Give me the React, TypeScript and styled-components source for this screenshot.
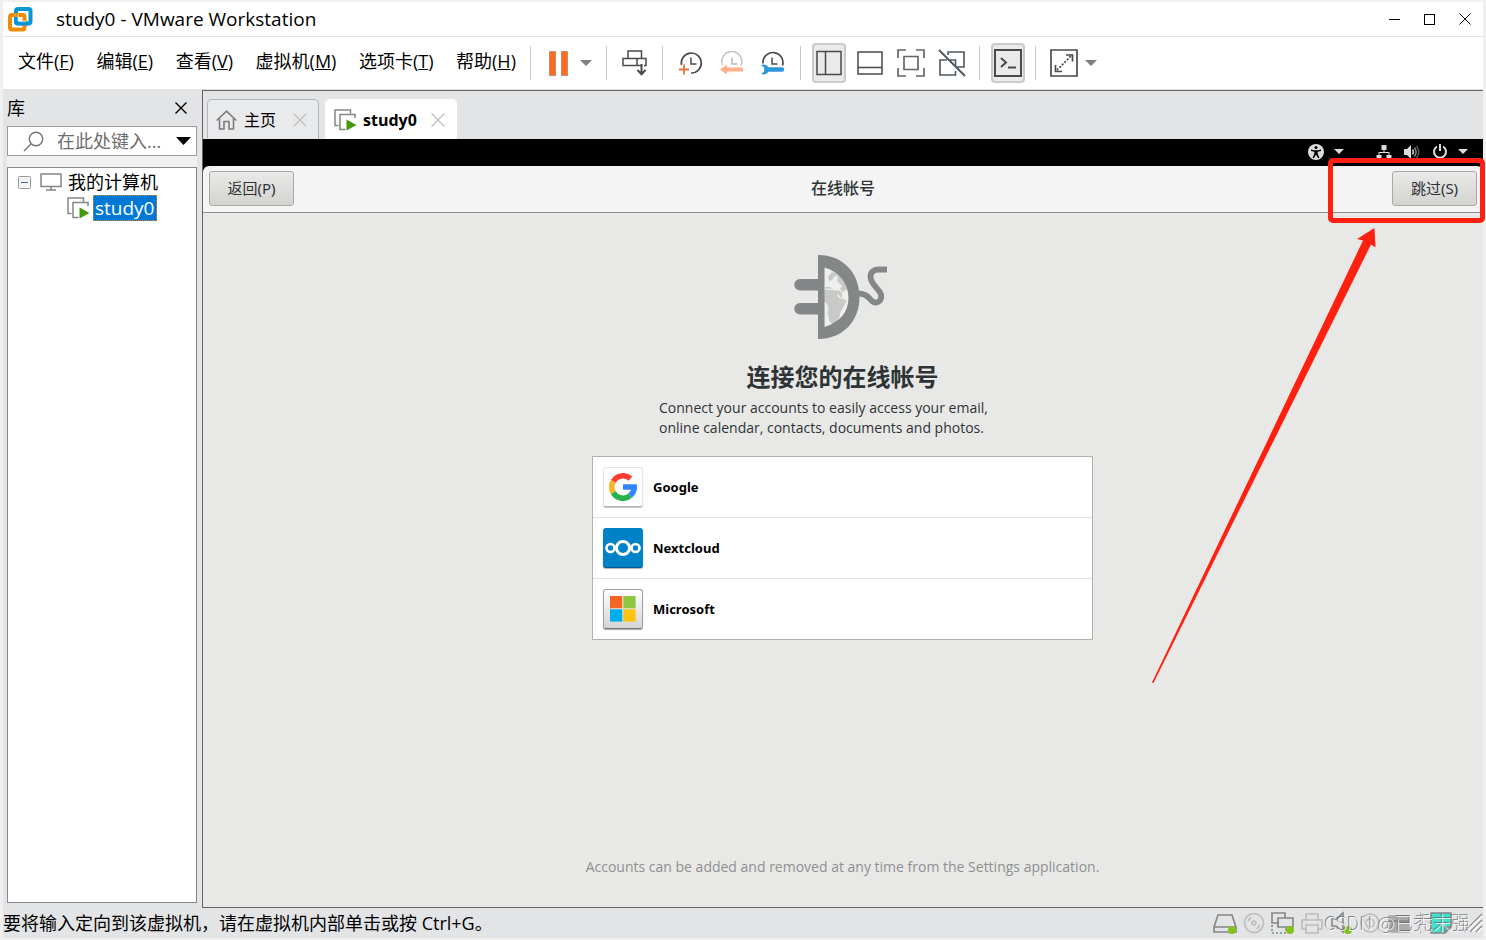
import React from "react";
import styled, { createGlobalStyle, css } from "styled-components";

const uiFont = '"Open Sans", "Noto Sans CJK SC", sans-serif';
const guestFont = '"Noto Sans", "Noto Sans CJK SC", sans-serif';

const GlobalStyle = createGlobalStyle`
  *, *::before, *::after { box-sizing: border-box; }
  body { margin: 0; background: #f0f0f0; font-family: ${uiFont}; color: #000; }
  button, input { font: inherit; color: inherit; }
  svg { display: block; flex: none; }
`;

const AppWindow = styled.div`
  display: flex;
  flex-direction: column;
  min-height: 100vh;
  padding: 2px 3px;
  overflow: hidden;
`;

const TitleBar = styled.header`
  display: flex;
  align-items: center;
  height: 35px;
  padding: 0 5px;
  background: #fff;
  border-bottom: 1px solid #e2e2e2;
`;

const WindowTitle = styled.h1`
  flex: 1;
  margin: 0 0 0 23px;
  font-size: 19px;
  line-height: 24px;
  font-weight: 400;
`;

const CaptionButton = styled.button`
  display: flex;
  align-items: center;
  justify-content: center;
  width: 35px;
  height: 34px;
  padding: 0;
  border: 0;
  background: none;
`;

const CaptionButtons = styled.div`
  display: flex;
  margin-right: -4px;
`;

const Toolbar = styled.div`
  display: flex;
  align-items: center;
  height: 53px;
  padding-left: 15px;
  background: #fff;
  border-bottom: 1px solid #e2e2e2;
`;

const MenuBar = styled.nav`
  display: flex;
  justify-content: space-between;
  width: 498px;
  margin: 0 4px 4px 0;
`;

const MenuButton = styled.button`
  padding: 0;
  border: 0;
  background: none;
  font-size: 18px;
  line-height: 24px;
  white-space: nowrap;
`;

const Separator = styled.span`
  flex: none;
  width: 1px;
  height: 34px;
  margin: 0 11px 0 10px;
  background: #c8c8c8;
`;

const ToolGroup = styled.div`
  display: flex;
  align-items: center;
  gap: 7px;
`;

const ToolButton = styled.button<{ $active?: boolean }>`
  display: flex;
  align-items: center;
  justify-content: center;
  width: 34px;
  height: 40px;
  padding: 0;
  border: 2px solid ${(p) => (p.$active ? "#c9caca" : "transparent")};
  border-radius: 4px;
  background: ${(p) => (p.$active ? "#e9eaeb" : "none")};
`;

const CaretButton = styled.button`
  display: flex;
  align-items: center;
  justify-content: center;
  width: 20px;
  height: 40px;
  padding: 0;
  border: 0;
  background: none;
`;

const Workspace = styled.div`
  display: flex;
  flex: 1;
  background: #e3e4e6;
`;

const Library = styled.aside`
  display: flex;
  flex-direction: column;
  flex: none;
  width: 199px;
  padding: 6px 5px 5px 4px;
`;

const LibraryHeader = styled.div`
  display: flex;
  align-items: center;
  justify-content: space-between;
  height: 30px;
  padding: 0 10px 6px 0;
`;

const LibraryTitle = styled.h2`
  margin: 0;
  font-size: 18px;
  line-height: 24px;
  font-weight: 400;
`;

const PlainButton = styled.button`
  display: flex;
  padding: 0;
  border: 0;
  background: none;
`;

const SearchBox = styled.label`
  display: flex;
  align-items: center;
  height: 30px;
  padding: 0 5px 0 15px;
  border: 1px solid #9a9b9d;
  background: #fff;
`;

const SearchInput = styled.input`
  flex: 1;
  min-width: 0;
  margin-left: 13px;
  padding: 0;
  border: 0;
  outline: 0;
  background: none;
  font-size: 18px;
  line-height: 24px;
  &::placeholder { color: #6d6d6d; opacity: 1; }
`;

const TreePanel = styled.div`
  display: flex;
  flex: 1;
  padding-top: 11px;
  background: linear-gradient(#f0f0f0, #f0f0f0) top / 100% 11px no-repeat;
`;

const Tree = styled.ul`
  flex: 1;
  margin: 0;
  padding: 1px 0 0 10px;
  list-style: none;
  border: 1px solid #828790;
  background: #fff;
`;

const TreeItem = styled.li<{ $depth?: number }>`
  display: flex;
  align-items: center;
  height: 26px;
  padding-left: ${(p) => (p.$depth ?? 0) * 49}px;
  font-size: 18px;
  line-height: 24px;
`;

const TreeIcon = styled.span`
  margin-left: 9px;
`;

const TreeLabel = styled.span<{ $selected?: boolean }>`
  margin-left: 6px;
  ${(p) =>
    p.$selected &&
    css`
      margin-left: 3px;
      padding: 0 1px;
      color: #fff;
      background: #0078d7;
      border: 1px dotted #e08728;
      font-size: 19px;
    `}
`;

const Pane = styled.main`
  display: flex;
  flex: 1;
  flex-direction: column;
  min-width: 0;
  border: 1px solid #646464;
  border-right: 0;
`;

const TabStrip = styled.div`
  display: flex;
  align-items: flex-end;
  gap: 6px;
  height: 48px;
  padding-left: 4px;
`;

const Tab = styled.div<{ $active?: boolean }>`
  display: flex;
  align-items: center;
  width: ${(p) => (p.$active ? 132 : 112)}px;
  height: 40px;
  padding: 0 11px 0 8px;
  border: 1px solid ${(p) => (p.$active ? "#fff" : "#b4b5b6")};
  border-bottom: 0;
  border-radius: 5px 5px 0 0;
  background: ${(p) => (p.$active ? "#fff" : "#e9eaec")};
`;

const TabLabel = styled.button<{ $active?: boolean }>`
  flex: 1;
  margin-left: ${(p) => (p.$active ? 6 : 7)}px;
  padding: 0;
  border: 0;
  background: none;
  text-align: left;
  font-size: 16px;
  line-height: 24px;
  font-weight: ${(p) => (p.$active ? 700 : 400)};
`;

const Guest = styled.section`
  position: relative;
  display: flex;
  flex: 1;
  flex-direction: column;
  background: #000;
  color: #2e3436;
  font-family: ${guestFont};
`;

const GuestTopBar = styled.div`
  display: flex;
  align-items: center;
  justify-content: flex-end;
  height: 27px;
  padding: 0 15px 2px 0;
`;

const IndicatorButton = styled.button`
  display: flex;
  align-items: center;
  gap: 10px;
  margin-left: 32px;
  padding: 0;
  border: 0;
  background: none;
`;

const SystemIcons = styled.span`
  display: flex;
  align-items: center;
  gap: 12px;
`;

const GuestHeader = styled.header`
  display: grid;
  grid-template-columns: 1fr auto 1fr;
  align-items: center;
  height: 47px;
  padding: 0 6px 2px;
  border-bottom: 1px solid #8e8e8a;
  border-radius: 6px 6px 0 0;
  background: #f4f4f4;
`;

const GuestTitle = styled.h2`
  margin: 0;
  font-size: 16px;
  line-height: 24px;
  font-weight: 500;
`;

const GuestButton = styled.button<{ $end?: boolean }>`
  justify-self: ${(p) => (p.$end ? "end" : "start")};
  width: 85px;
  height: 35px;
  padding: 0;
  border: 1px solid #a9a9a5;
  border-radius: 3px;
  background: linear-gradient(#e9e9e8, #d3d3d0);
  font-size: 15px;
  line-height: 24px;
`;

const AccountsPage = styled.div`
  display: flex;
  flex: 1;
  flex-direction: column;
  align-items: center;
  padding: 42px 17px 30px 16px;
  background: #e8e8e6;
`;

const PageHeading = styled.h3`
  margin: 22px 0 5px;
  font-size: 24px;
  line-height: 32px;
  font-weight: 700;
`;

const Description = styled.p`
  width: 367px;
  margin: 0 0 18px;
  font-family: ${uiFont};
  font-size: 14px;
  line-height: 20px;
`;

const ProviderList = styled.ul`
  width: 100%;
  max-width: 501px;
  margin: 0 0 40px;
  padding: 0;
  list-style: none;
  border: 1px solid #b3b3ae;
  background: #fff;
`;

const ProviderItem = styled.li`
  & + & { border-top: 1px solid #e1e1e0; }
`;

const ProviderButton = styled.button`
  display: flex;
  align-items: center;
  gap: 10px;
  width: 100%;
  height: 60px;
  padding: 0 10px;
  border: 0;
  background: none;
  color: #000;
  font-size: 13px;
  line-height: 20px;
  font-weight: 700;
`;

const Tile = styled.span<{ $kind: "google" | "nextcloud" | "microsoft" }>`
  display: flex;
  align-items: center;
  justify-content: center;
  width: 40px;
  height: 40px;
  border-radius: 3px;
  ${(p) =>
    p.$kind === "google" &&
    css`
      border: 1px solid #e6e6e4;
      border-bottom-color: #b4b4b0;
      box-shadow: 0 1px 1px #c4c4c0;
    `}
  ${(p) =>
    p.$kind === "nextcloud" &&
    css`
      background: #0082c9;
      border-bottom: 1px solid #00588a;
      box-shadow: 0 1px 1px #b0b0b0;
    `}
  ${(p) =>
    p.$kind === "microsoft" &&
    css`
      background: linear-gradient(#fff, #d4d4d4);
      border: 1px solid #a0a0a0;
      border-bottom-color: #777;
      box-shadow: 0 1px 1px #a8a8a8;
    `}
`;

const Footnote = styled.p`
  margin: auto 0 0;
  color: #8f9190;
  font-family: ${uiFont};
  font-size: 14px;
  line-height: 20px;
`;

const HighlightFrame = styled.div`
  position: absolute;
  top: 19px;
  right: -2px;
  width: 157px;
  height: 65px;
  border: 5px solid #ff2010;
  border-radius: 5px;
  pointer-events: none;
`;

const HighlightArrow = styled.svg`
  position: absolute;
  top: 88px;
  right: 106px;
  pointer-events: none;
`;

const StatusBar = styled.footer`
  position: relative;
  display: flex;
  align-items: center;
  justify-content: space-between;
  height: 30px;
  background: #e3e4e6;
`;

const StatusText = styled.span`
  font-size: 18px;
  line-height: 24px;
`;

const StatusTray = styled.div`
  display: flex;
  align-items: center;
  gap: 10px;
`;

const StatusIcons = styled.div`
  display: flex;
  align-items: center;
  gap: 5px;
`;

const StatusSeparator = styled.span`
  width: 1px;
  height: 22px;
  margin: 0 3px 0 4px;
  background: #bdbdbd;
`;

const Watermark = styled.span`
  position: absolute;
  right: 12px;
  top: 2px;
  color: rgba(250, 250, 250, 0.85);
  text-shadow: -1px -1px 0 rgba(100, 100, 100, 0.8);
  font-family: "Noto Sans CJK SC", sans-serif;
  font-size: 19px;
  line-height: 26px;
  font-weight: 300;
  white-space: nowrap;
`;

const ink = "#4a4a4a";

const VmwareLogo = () => (
  <svg width="25" height="25" viewBox="0 0 25 25" fill="none" strokeWidth="4">
    <rect x="8" y="2" width="14.5" height="14.5" rx="2" stroke="#0a95d5" />
    <rect x="2" y="8" width="14.5" height="14.5" rx="2" stroke="#f38b00" />
    <path d="M8 10.5V14.5a2 2 0 0 0 2 2H20.5" stroke="#0a95d5" />
    <path d="M7.5 8h-1M10.2 7.2V13.2q0 1 1 1H18" stroke="#fff" strokeWidth="0.8" />
  </svg>
);

const Caret = ({ w = 12, h = 6, color = "#808080" }: { w?: number; h?: number; color?: string }) => (
  <svg width={w} height={h} viewBox="0 0 12 6" preserveAspectRatio="none">
    <path d="M0 0H12L6 6Z" fill={color} />
  </svg>
);

const Cross = ({ size, color, stroke = 1 }: { size: number; color: string; stroke?: number }) => (
  <svg width={size} height={size} viewBox="0 0 12 12">
    <path d="M0.5 0.5L11.5 11.5M11.5 0.5L0.5 11.5" stroke={color} strokeWidth={stroke} />
  </svg>
);

const PauseIcon = () => (
  <svg width="20" height="25" viewBox="0 0 20 25">
    <path d="M0.5 0.5h6v24h-6zM12.5 0.5h6v24h-6z" fill="#ff6a1c" stroke="#c2906f" />
  </svg>
);

const SendKeysIcon = () => (
  <svg width="26" height="26" viewBox="0 0 26 26" fill="none" stroke={ink} strokeWidth="1.5">
    <path d="M6 1h13.500v7.500H6zM1 8.500h14v7H1zM19 15.500H15V8.500h9v7h-2" />
    <path d="M19.500 14v10M15.500 20l4 4.200 4-4.200" strokeWidth="2" />
  </svg>
);

const Dial = ({ color }: { color: string }) => (
  <path d="M12 6.500v6.500h5.500" stroke={color} strokeWidth="1.500" />
);

const SnapshotIcon = () => (
  <svg width="24" height="24" viewBox="0 0 24 24" fill="none">
    <path d="M2.500 14A10 10 0 1 1 12 22" stroke={ink} strokeWidth="1.700" />
    <Dial color={ink} />
    <path d="M0 18.500h10M5 13.500v10" stroke="#e8703a" strokeWidth="1.800" />
  </svg>
);

const RevertIcon = () => (
  <svg width="24" height="24" viewBox="0 0 24 24" fill="none">
    <path d="M2.500 14A10 10 0 1 1 21 14.500" stroke="#c0c0c0" strokeWidth="1.500" />
    <Dial color="#b8b8b8" />
    <path d="M0 18.500l7-5v3h16v4H7v3z" fill="#ffb08c" />
  </svg>
);

const ManageIcon = () => (
  <svg width="26" height="24" viewBox="0 0 26 24" fill="none">
    <path d="M3 12.500A10 10 0 1 1 22.500 14.500" stroke={ink} strokeWidth="1.700" />
    <Dial color={ink} />
    <path d="M1 14.200c3-1.500 6-.6 7.200 2.100H22a2.200 2.200 0 0 1 0 4.400H8.200C7 23.300 4 24.200 1 22.800l3.200-2.300v-4z" fill="#2c97d9" />
  </svg>
);

const SplitIcon = () => (
  <svg width="26" height="26" viewBox="0 0 26 26" fill="none" stroke={ink} strokeWidth="1.500">
    <path d="M1 1.500h24v23H1zM9.500 1.500v23" />
  </svg>
);

const ThumbBarIcon = () => (
  <svg width="26" height="26" viewBox="0 0 26 26" fill="none" stroke={ink} strokeWidth="1.500">
    <path d="M1 2h24v22H1zM1 17.500h24" />
  </svg>
);

const FullScreenIcon = () => (
  <svg width="28" height="28" viewBox="0 0 28 28" fill="none" stroke="#666" strokeWidth="1.700">
    <path d="M1 9V1h8M19 1h8v8M27 19v8h-8M9 27H1v-8M7 7.500h14v13H7z" />
  </svg>
);

const UnityIcon = () => (
  <svg width="28" height="28" viewBox="0 0 28 28" fill="none" stroke="#4d5863" strokeWidth="1.600">
    <path d="M10 6V3h16v15h-7M17.500 22v4H2V11h7M12 11h5.500v6" />
    <path d="M1 1l26 26" strokeWidth="2" />
  </svg>
);

const ConsoleIcon = () => (
  <svg width="28" height="28" viewBox="0 0 28 28" fill="none" stroke={ink} strokeWidth="2">
    <path d="M1 1h26v26H1z" />
    <path d="M7 9l5 4.500-5 4.500M14 18.500h8" />
  </svg>
);

const StretchIcon = () => (
  <svg width="28" height="28" viewBox="0 0 28 28" fill="none" stroke={ink} strokeWidth="1.700">
    <path d="M1 1h26v26H1zM16 6h6.500v6.500M5.500 16v6.500H12" />
    <path d="M7 21L21 7" strokeDasharray="2 1.500" />
  </svg>
);

const SearchIcon = () => (
  <svg width="21" height="21" viewBox="0 0 21 21" fill="none" stroke="#777" strokeWidth="1.500">
    <circle cx="13" cy="8" r="6.700" />
    <path d="M8 13L1 20" />
  </svg>
);

const ExpanderIcon = () => (
  <svg width="13" height="13" viewBox="0 0 13 13">
    <rect x="0.500" y="0.500" width="12" height="12" rx="1" fill="#f5f5f5" stroke="#999" />
    <path d="M3 6.500h7" stroke="#4663a8" />
  </svg>
);

const MonitorIcon = () => (
  <svg width="22" height="18" viewBox="0 0 22 18" fill="none" stroke="#858585" strokeWidth="1.500">
    <path d="M1 1h20v12.500H1zM11 13.500V17M6 17h10" />
  </svg>
);

const VmIcon = () => (
  <svg width="23" height="22" viewBox="0 0 23 22" fill="none">
    <path d="M4.500 16.500H1V1h15.500v3.500M11.500 20.500H6V5.500h15V9" stroke="#858585" strokeWidth="1.500" />
    <path d="M12.500 10.500l10 5.500-10 5.500z" fill="#45990f" />
  </svg>
);

const HomeIcon = () => (
  <svg width="21" height="20" viewBox="0 0 21 20" fill="none" stroke="#7d7d7d" strokeWidth="1.600">
    <path d="M0.700 10.500L10.500 1.200l9.800 9.300M3.500 8.500V19h4.500v-7.500h5V19h4.500V8.500" />
  </svg>
);

const AccessibilityIcon = () => (
  <svg width="16" height="16" viewBox="0 0 16 16">
    <circle cx="8" cy="8" r="8" fill="#ddd" />
    <circle cx="8" cy="3.600" r="1.500" fill="#000" />
    <path d="M3 5.500l3.500.7h3l3.500-.7v1.400l-3.300.8v2l1.700 4-1.300.5L8 10.500l-2.100 3.700-1.300-.5 1.700-4v-2L3 6.900z" fill="#000" />
  </svg>
);

const NetworkIcon = () => (
  <svg width="16" height="14" viewBox="0 0 16 14" fill="#ddd">
    <path d="M5.500 0h5v5h-2v2h5v3h2v4h-5v-4h2V8h-9v2h2v4h-5v-4h2V7h5V5h-2z" />
  </svg>
);

const VolumeIcon = () => (
  <svg width="16" height="14" viewBox="0 0 16 14" fill="none">
    <path d="M0 4h3l4-4v14L3 10H0z" fill="#ddd" />
    <path d="M8.500 4.500q1.700 2.500 0 5" stroke="#ccc" strokeWidth="1.500" />
    <path d="M10.500 2.500q3.200 4.500 0 9" stroke="#888" strokeWidth="1.500" />
    <path d="M12.500 1q4.500 6 0 12" stroke="#555" strokeWidth="1.500" />
  </svg>
);

const PowerIcon = () => (
  <svg width="16" height="15" viewBox="0 0 16 15" fill="none" stroke="#ddd" strokeWidth="2">
    <path d="M5 2.500a6 6 0 1 0 6 0M8 0v7" />
  </svg>
);

const PlugArt = () => (
  <svg width="97" height="84" viewBox="0 0 97 84">
    <path d="M31 12.500C46 16 54.500 28 54.500 43S45 69 31 71z" fill="#efefed" />
    <path d="M30.500 32h5l4 2 5 1 3 2 1 6 4 3-2 4-4 7-1 5-4 6-3 1-3-3-2-8 1-6-3-5h-1.500zM34 22l4-5 4 1 1 3-3 1-2 3-3 1zM42 17q6 3 10 11l1 6-4 3-3-3 2-3-5-5 1-4z" fill="#c9c9c8" />
    <path d="M30.500 31q6-1 12 2l1 2-13-1zM44 39q1 5 5 4l4-3" fill="none" stroke="#efefed" strokeWidth="1.300" />
    <path d="M24 0C50 0 65.500 19 65.500 42S50 84 24 84V59.500H6a5.750 5.750 0 0 1 0-11.500H24V35.500H6a5.750 5.750 0 0 1 0-11.500H24zM30.500 12.500V72C46 67 54.500 57 54.500 43S46 17 30.500 12.500z" fill="#838787" fillRule="evenodd" />
    <path d="M64 38.500c6 0 9 1.500 12 5.500 2 2.500 5 4.500 8 3 4-2 4-7 1.500-10.500-3-4-9-9-9-14.500 0-5 3.200-7.500 7.700-7.500h8.800" fill="none" stroke="#838787" strokeWidth="5.800" />
  </svg>
);

const GoogleMark = () => (
  <svg width="28" height="28" viewBox="-14 -14 28 28" fill="none" strokeWidth="5.600">
    <path d="M-9.700 -5.600A11.200 11.200 0 0 1 7.500 -8.300" stroke="#ff3e30" />
    <path d="M-9.700 5.600A11.200 11.200 0 0 1 -9.700 -5.600" stroke="#f7b529" />
    <path d="M7.200 8.600A11.200 11.200 0 0 1 -9.700 5.600" stroke="#26b14c" />
    <path d="M11.200 0A11.200 11.200 0 0 1 7.200 8.600" stroke="#3086ff" />
    <path d="M0 -2.700h13.700q.5 2.700 0 5.400H0z" fill="#3086ff" />
  </svg>
);

const NextcloudMark = () => (
  <svg width="36" height="16" viewBox="0 0 36 16" fill="none" stroke="#fff">
    <circle cx="18" cy="8" r="6.500" strokeWidth="3" />
    <circle cx="5.500" cy="8" r="4" strokeWidth="2.700" />
    <circle cx="30.500" cy="8" r="4" strokeWidth="2.700" />
  </svg>
);

const MicrosoftMark = () => (
  <svg width="26" height="26" viewBox="0 0 26 26">
    <path d="M0 0h12.300v12.300H0z" fill="#f56523" />
    <path d="M13.300 0h12.300v12.300H13.300z" fill="#8ec73f" />
    <path d="M0 13.300h12.300v12.300H0z" fill="#00aef0" />
    <path d="M13.300 13.300h12.300v12.300H13.300z" fill="#ffc211" />
  </svg>
);

const StatusGlyph = ({ dim, dot, children }: { dim?: boolean; dot?: boolean; children: React.ReactNode }) => (
  <svg width="24" height="24" viewBox="0 0 24 24" fill="none" stroke={dim ? "#bbb" : "#858585"} strokeWidth="1.600">
    {children}
    {dot && <circle cx="19" cy="19" r="4" fill="#84c318" stroke="none" />}
  </svg>
);

const SizeGrip = () => (
  <svg width="20" height="20" viewBox="0 0 20 20" stroke="#8c8c8c" strokeWidth="1.500">
    <path d="M1 19L19 1M7 19L19 7M13 19l6-6" />
    <path d="M3 19L19 3M9 19L19 9M15 19l4-4" stroke="#fff" />
  </svg>
);

const menus: [string, string][] = [
  ["文件", "F"],
  ["编辑", "E"],
  ["查看", "V"],
  ["虚拟机", "M"],
  ["选项卡", "T"],
  ["帮助", "H"],
];

const providers = [
  { name: "Google", kind: "google" as const, mark: <GoogleMark /> },
  { name: "Nextcloud", kind: "nextcloud" as const, mark: <NextcloudMark /> },
  { name: "Microsoft", kind: "microsoft" as const, mark: <MicrosoftMark /> },
];

export default function App() {
  return (
    <AppWindow>
      <GlobalStyle />
      <TitleBar>
        <VmwareLogo />
        <WindowTitle>study0 - VMware Workstation</WindowTitle>
        <CaptionButtons>
          <CaptionButton aria-label="最小化">
            <svg width="11" height="1"><path d="M0 0.500h11" stroke="#000" /></svg>
          </CaptionButton>
          <CaptionButton aria-label="最大化">
            <svg width="11" height="11"><rect x="0.500" y="0.500" width="10" height="10" fill="none" stroke="#000" /></svg>
          </CaptionButton>
          <CaptionButton aria-label="关闭"><Cross size={12} color="#000" /></CaptionButton>
        </CaptionButtons>
      </TitleBar>

      <Toolbar>
        <MenuBar>
          {menus.map(([label, key]) => (
            <MenuButton key={key}>
              {label}(<u>{key}</u>)
            </MenuButton>
          ))}
        </MenuBar>
        <Separator />
        <ToolButton aria-label="挂起"><PauseIcon /></ToolButton>
        <CaretButton aria-label="电源选项"><Caret /></CaretButton>
        <Separator />
        <ToolButton aria-label="发送按键"><SendKeysIcon /></ToolButton>
        <Separator />
        <ToolGroup>
          <ToolButton aria-label="拍摄快照"><SnapshotIcon /></ToolButton>
          <ToolButton aria-label="恢复快照"><RevertIcon /></ToolButton>
          <ToolButton aria-label="管理快照"><ManageIcon /></ToolButton>
        </ToolGroup>
        <Separator />
        <ToolGroup>
          <ToolButton $active aria-label="显示库"><SplitIcon /></ToolButton>
          <ToolButton aria-label="缩略图栏"><ThumbBarIcon /></ToolButton>
          <ToolButton aria-label="全屏"><FullScreenIcon /></ToolButton>
          <ToolButton aria-label="Unity"><UnityIcon /></ToolButton>
        </ToolGroup>
        <Separator />
        <ToolButton $active aria-label="控制台视图"><ConsoleIcon /></ToolButton>
        <Separator />
        <ToolButton aria-label="拉伸"><StretchIcon /></ToolButton>
        <CaretButton aria-label="拉伸选项"><Caret /></CaretButton>
      </Toolbar>

      <Workspace>
        <Library>
          <LibraryHeader>
            <LibraryTitle>库</LibraryTitle>
            <PlainButton aria-label="关闭库"><Cross size={12} color="#000" stroke={1.4} /></PlainButton>
          </LibraryHeader>
          <SearchBox>
            <SearchIcon />
            <SearchInput placeholder="在此处键入..." aria-label="搜索" />
            <Caret w={15} h={8} color="#000" />
          </SearchBox>
          <TreePanel>
            <Tree>
              <TreeItem>
                <PlainButton aria-label="折叠"><ExpanderIcon /></PlainButton>
                <TreeIcon><MonitorIcon /></TreeIcon>
                <TreeLabel>我的计算机</TreeLabel>
              </TreeItem>
              <TreeItem $depth={1}>
                <VmIcon />
                <TreeLabel $selected>study0</TreeLabel>
              </TreeItem>
            </Tree>
          </TreePanel>
        </Library>

        <Pane>
          <TabStrip>
            <Tab>
              <HomeIcon />
              <TabLabel>主页</TabLabel>
              <PlainButton aria-label="关闭主页"><Cross size={14} color="#c4c4c4" stroke={1.3} /></PlainButton>
            </Tab>
            <Tab $active>
              <VmIcon />
              <TabLabel $active>study0</TabLabel>
              <PlainButton aria-label="关闭 study0"><Cross size={14} color="#c4c4c4" stroke={1.3} /></PlainButton>
            </Tab>
          </TabStrip>

          <Guest>
            <GuestTopBar>
              <IndicatorButton aria-label="辅助功能">
                <AccessibilityIcon />
                <Caret w={10} h={5} color="#ddd" />
              </IndicatorButton>
              <IndicatorButton aria-label="系统">
                <SystemIcons>
                  <NetworkIcon />
                  <VolumeIcon />
                  <PowerIcon />
                </SystemIcons>
                <Caret w={10} h={5} color="#ddd" />
              </IndicatorButton>
            </GuestTopBar>
            <GuestHeader>
              <GuestButton>返回(P)</GuestButton>
              <GuestTitle>在线帐号</GuestTitle>
              <GuestButton $end>跳过(S)</GuestButton>
            </GuestHeader>
            <AccountsPage>
              <PlugArt />
              <PageHeading>连接您的在线帐号</PageHeading>
              <Description>
                Connect your accounts to easily access your email,
                <br />
                online calendar, contacts, documents and photos.
              </Description>
              <ProviderList>
                {providers.map((p) => (
                  <ProviderItem key={p.name}>
                    <ProviderButton>
                      <Tile $kind={p.kind}>{p.mark}</Tile>
                      {p.name}
                    </ProviderButton>
                  </ProviderItem>
                ))}
              </ProviderList>
              <Footnote>Accounts can be added and removed at any time from the Settings application.</Footnote>
            </AccountsPage>
            <HighlightFrame />
            <HighlightArrow width="226" height="457" viewBox="0 0 226 457">
              <path d="M223.500 1L206 12l6 1.500L1 455.500l1.500.5L220 17.500l4.500 3z" fill="#ff2010" />
            </HighlightArrow>
          </Guest>
        </Pane>
      </Workspace>

      <StatusBar>
        <StatusText>要将输入定向到该虚拟机，请在虚拟机内部单击或按 Ctrl+G。</StatusText>
        <StatusTray>
          <StatusIcons>
            <StatusGlyph dot>
              <path d="M5 4h14l4 12v5H1v-5zM1 16h22" />
            </StatusGlyph>
            <StatusGlyph dim>
              <circle cx="12" cy="12" r="9.500" />
              <circle cx="12" cy="12" r="2" />
              <path d="M6 10l3-4M18 14l-3 4" />
            </StatusGlyph>
            <StatusGlyph dot>
              <path d="M8 12H1V2h13v5M7 7h15v9H7zM15 16v4" />
              <path d="M1 14v8h14" strokeDasharray="2 2" />
            </StatusGlyph>
            <StatusGlyph dim>
              <path d="M6 9V3h12v6M6 18H2V9h20v9h-4M6 14h12v8H6z" />
            </StatusGlyph>
            <StatusGlyph dot>
              <path d="M3 8h4l7-6v19l-7-6H3z" />
            </StatusGlyph>
            <StatusGlyph dim>
              <circle cx="12" cy="12" r="9" />
              <circle cx="12" cy="12" r="4" />
            </StatusGlyph>
            <StatusGlyph>
              <path d="M2 5h20v16H2z" fill="#aaa" stroke="#aaa" />
              <path d="M2 10h20" />
            </StatusGlyph>
            <StatusSeparator />
            <StatusGlyph>
              <path d="M2 2h20v14l-6 6H2z" fill="#3fe0cc" />
              <path d="M16 22v-6h6" />
            </StatusGlyph>
          </StatusIcons>
          <SizeGrip />
        </StatusTray>
        <Watermark>CSDN @已秃末强</Watermark>
      </StatusBar>
    </AppWindow>
  );
}
